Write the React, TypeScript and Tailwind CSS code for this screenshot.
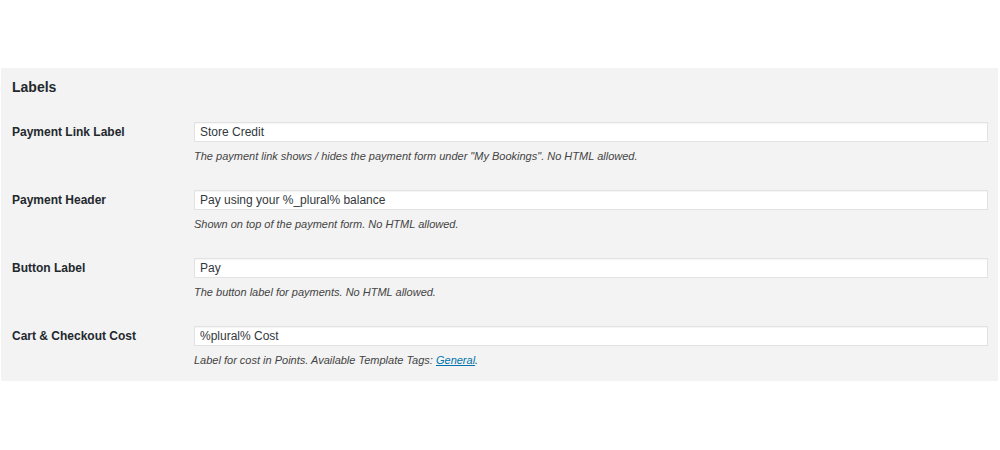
import type { ReactNode } from "react";

type Row = {
  label: string;
  value: string;
  help: ReactNode;
};

const rows: Row[] = [
  {
    label: "Payment Link Label",
    value: "Store Credit",
    help: (
      <>The payment link shows / hides the payment form under "My Bookings". No HTML allowed.</>
    ),
  },
  {
    label: "Payment Header",
    value: "Pay using your %_plural% balance",
    help: <>Shown on top of the payment form. No HTML allowed.</>,
  },
  {
    label: "Button Label",
    value: "Pay",
    help: <>The button label for payments. No HTML allowed.</>,
  },
  {
    label: "Cart & Checkout Cost",
    value: "%plural% Cost",
    help: (
      <>
        Label for cost in Points. Available Template Tags:{" "}
        <a href="#" className="text-[#0073aa] underline">
          General
        </a>
        .
      </>
    ),
  },
];

export default function App() {
  return (
    <div className="min-h-[450px] bg-white pt-[68px] font-['Liberation_Sans',Arial,sans-serif] text-[#23282d]">
      <div className="ml-[1px] mr-[2px] bg-[#f3f3f3] pt-[9px] pb-[14px] pr-[10px]">
        <h3 className="pl-[11px] text-[14px] leading-[20px] font-bold">Labels</h3>

        <div className="mt-[25px] flex flex-col gap-[27px]">
          {rows.map((row) => (
            <div key={row.label} className="flex items-start">
              <label className="w-[193px] shrink-0 pl-[11px] text-[12px] leading-[20px] font-bold">
                {row.label}
              </label>
              <div className="flex-1">
                <input
                  type="text"
                  defaultValue={row.value}
                  className="block h-[20px] w-full border border-[#e2e2e2] bg-white pl-[5px] text-[12px] text-[#32373c] shadow-[inset_0_1px_1px_rgba(0,0,0,0.04)] outline-none"
                />
                <p className="mt-[7px] text-[11px] leading-[14px] italic text-[#444]">{row.help}</p>
              </div>
            </div>
          ))}
        </div>
      </div>
    </div>
  );
}
